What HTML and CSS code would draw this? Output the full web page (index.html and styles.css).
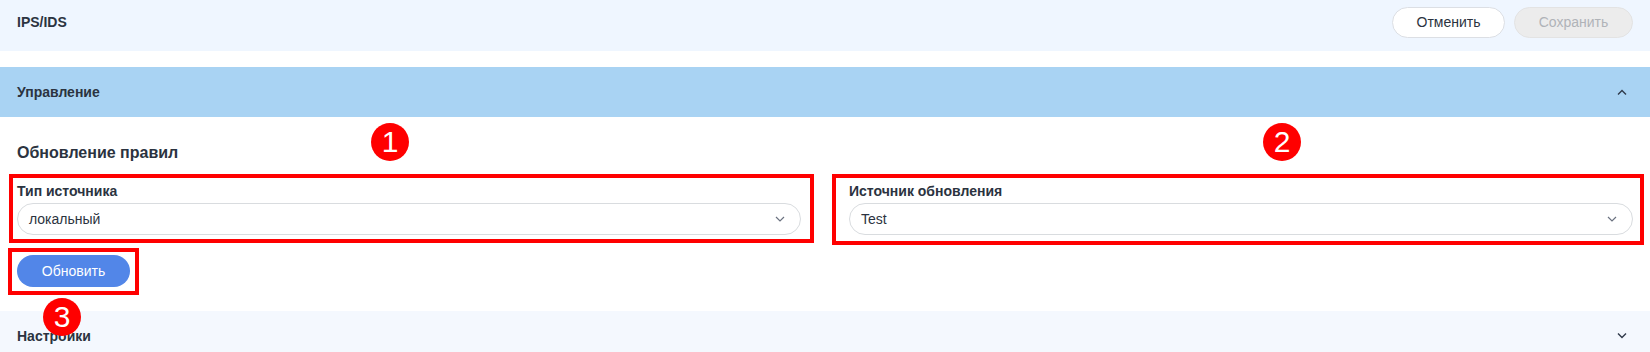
FILE: index.html
```html
<!DOCTYPE html>
<html lang="ru">
<head>
  <meta charset="UTF-8">
  <title>IPS/IDS</title>
  <link rel="stylesheet" href="styles.css">
</head>
<body>

  <div class="page">
    <header class="topbar">
      <div class="title">IPS/IDS</div>
      <div class="actions">
        <button class="btn btn-cancel">Отменить</button>
        <button class="btn btn-save" disabled>Сохранить</button>
      </div>
    </header>

    <section class="panel">
      <div class="panel-head open">
        <span>Управление</span>
        <svg class="chev" width="12" height="8" viewBox="0 0 12 8"><path d="M2 6.5 L6 2.5 L10 6.5" fill="none" stroke="#2f3a4a" stroke-width="1.4"/></svg>
      </div>
      <div class="panel-body">
        <h3>Обновление правил</h3>
        <div class="fields">
          <div class="field">
            <label>Тип источника</label>
            <div class="select">
              <span>локальный</span>
              <svg width="12" height="8" viewBox="0 0 12 8"><path d="M2 2 L6 6 L10 2" fill="none" stroke="#6b7280" stroke-width="1.2"/></svg>
            </div>
          </div>
          <div class="field">
            <label>Источник обновления</label>
            <div class="select">
              <span>Test</span>
              <svg width="12" height="8" viewBox="0 0 12 8"><path d="M2 2 L6 6 L10 2" fill="none" stroke="#6b7280" stroke-width="1.2"/></svg>
            </div>
          </div>
        </div>
        <button class="btn btn-primary">Обновить</button>
      </div>
    </section>

    <section class="panel">
      <div class="panel-head closed">
        <span>Настройки</span>
        <svg class="chev" width="12" height="8" viewBox="0 0 12 8"><path d="M2 1.5 L6 5.5 L10 1.5" fill="none" stroke="#2f3a4a" stroke-width="1.4"/></svg>
      </div>
    </section>

    <!-- пометки поверх скриншота -->
    <div class="mark box box-1"></div>
    <div class="mark box box-2"></div>
    <div class="mark box box-3"></div>
    <div class="mark num num-1">1</div>
    <div class="mark num num-2">2</div>
    <div class="mark num num-3">3</div>
  </div>

</body>
</html>
```

FILE: styles.css
```css
body {
  margin: 0;
  font-family: "Liberation Sans", Arial, sans-serif;
  color: #2b3340;
  background-color: #fff;
}

.page {
  position: relative;
  height: 352px;
  overflow: hidden;
}

.topbar {
  height: 51px;
  background-color: #eff6ff;
  padding: 0 17px;
  display: flex;
  align-items: center;
  justify-content: space-between;
  margin-bottom: 16px;
}

.title {
  font-size: 14px;
  font-weight: bold;
  margin-top: -7px;
}

.actions {
  display: flex;
  gap: 9px;
  margin-top: -7px;
}

.btn {
  font-family: inherit;
  font-size: 14px;
  height: 31px;
  border-radius: 16px;
  padding: 0 20px;
  cursor: pointer;
}

.btn-cancel {
  width: 113px;
  background-color: #fff;
  border: 1px solid #dcdfe4;
  color: #2b3340;
}

.btn-save {
  width: 119px;
  background-color: #ececec;
  border: 1px solid #e3e3e3;
  color: #b0b3b8;
}

.btn-primary {
  width: 113px;
  height: 32px;
  background-color: #5286e8;
  border: none;
  color: #fff;
  margin-top: 20px;
}

.panel-head {
  height: 50px;
  padding: 0 22px 0 17px;
  display: flex;
  align-items: center;
  justify-content: space-between;
  font-size: 14px;
  font-weight: bold;
}

.panel-head.open {
  background-color: #a9d3f3;
}

.panel-head.closed {
  background-color: #f4f8fe;
}

.panel-body {
  padding: 26px 17px 24px;
}

.panel-body h3 {
  font-size: 16px;
  margin: 0 0 19px;
  line-height: 20px;
}

.fields {
  display: grid;
  grid-template-columns: 1fr 1fr;
  gap: 48px;
}

.field label {
  display: block;
  font-size: 14px;
  font-weight: bold;
  line-height: 18px;
  margin-bottom: 3px;
}

.select {
  height: 30px;
  border: 1px solid #d9dcdf;
  border-radius: 16px;
  padding: 0 14px 0 11px;
  display: flex;
  align-items: center;
  justify-content: space-between;
  font-size: 14px;
}

/* аннотации */
.mark {
  position: absolute;
}

.box {
  border: 4px solid #ff0000;
  box-sizing: border-box;
}

.box-1 {
  left: 9px;
  top: 174px;
  width: 805px;
  height: 69px;
}

.box-2 {
  left: 832px;
  top: 174px;
  width: 812px;
  height: 71px;
}

.box-3 {
  left: 8px;
  top: 248px;
  width: 131px;
  height: 47px;
}

.num {
  width: 38px;
  height: 38px;
  border-radius: 50%;
  background-color: #ff0000;
  color: #fff;
  font-size: 30px;
  line-height: 38px;
  text-align: center;
}

.num-1 {
  left: 371px;
  top: 123px;
}

.num-2 {
  left: 1263px;
  top: 123px;
}

.num-3 {
  left: 43px;
  top: 298px;
}
```
